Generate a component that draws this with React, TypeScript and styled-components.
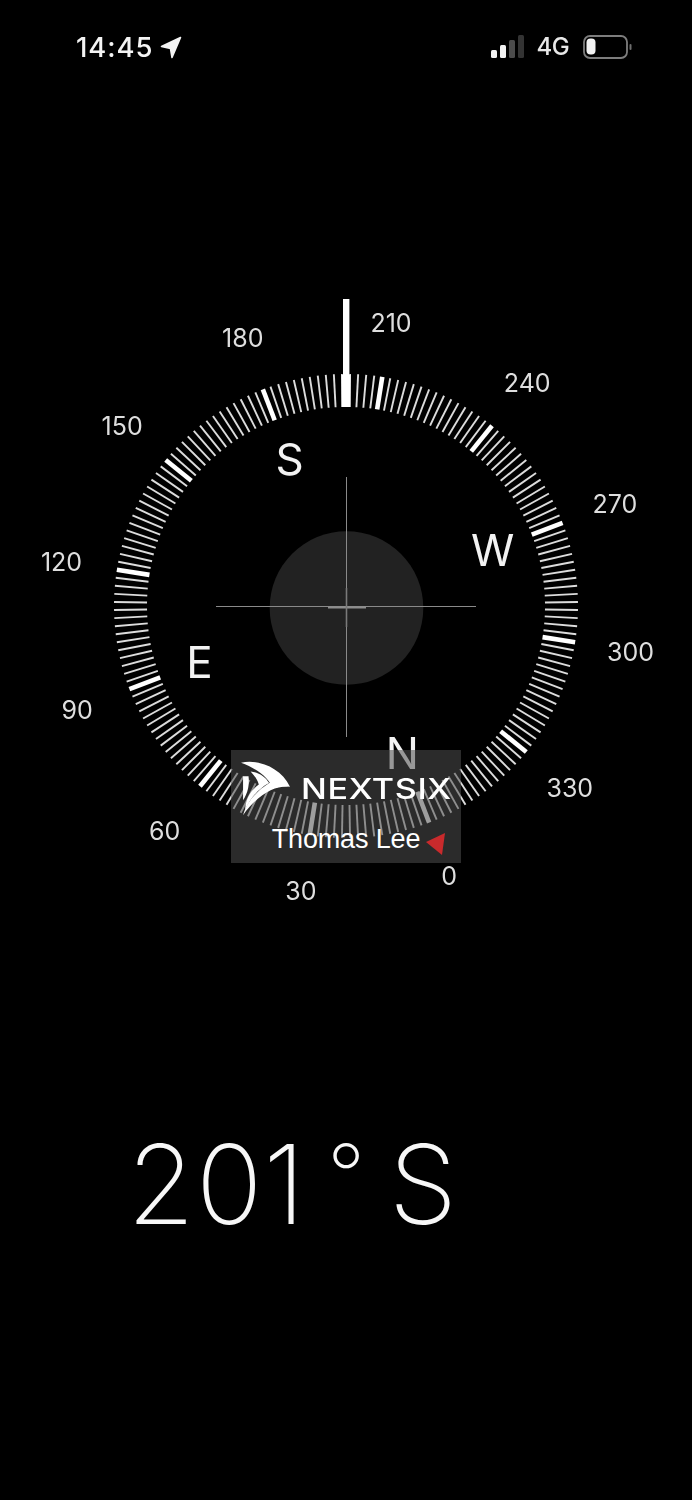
import React from "react";
import styled, { createGlobalStyle } from "styled-components";

const Global = createGlobalStyle`
  html, body { margin: 0; padding: 0; background: #000; }
  body { font-family: Inter, "Liberation Sans", sans-serif; color: #fff; }
`;

const CX = 346;
const CY = 346;
const HEADING = 201;

const Screen = styled.div`
  width: 692px;
  height: 1500px;
  background: #000;
  display: flex;
  flex-direction: column;
  overflow: hidden;
`;

const StatusBar = styled.header`
  height: 34px;
  padding: 30px 60px 0 76px;
  display: flex;
  justify-content: space-between;
  align-items: flex-start;
  filter: blur(0.5px);
`;

const TimeGroup = styled.div`
  display: flex;
  align-items: center;
  gap: 7px;
`;

const Time = styled.span`
  font-size: 27.5px;
  line-height: 34px;
  font-weight: 500;
  letter-spacing: 0.9px;
  color: #f4f4f4;
`;

const Indicators = styled.div`
  display: flex;
  align-items: center;
  height: 34px;
  gap: 12px;
`;

const Network = styled.span`
  font-size: 24px;
  line-height: 34px;
  font-weight: 500;
  letter-spacing: -0.6px;
  margin-right: 2px;
  color: #e8e8e8;
`;

const Stage = styled.main`
  position: relative;
  width: 692px;
  height: 692px;
  margin-top: 196px;
  flex: none;
`;

const Dial = styled.svg`
  display: block;
  filter: blur(0.45px);
`;

const DegreeLabel = styled.span`
  position: absolute;
  transform: translate(-50%, -50%);
  font-size: 25px;
  line-height: 30px;
  font-weight: 400;
  color: #dedede;
  filter: blur(0.3px);
`;

const CardinalLabel = styled.span`
  position: absolute;
  transform: translate(-50%, -50%);
  font-size: 44px;
  line-height: 50px;
  font-weight: 400;
  color: #f2f2f2;
  filter: blur(0.3px);
`;

const Watermark = styled.aside`
  position: absolute;
  left: 231px;
  top: 490px;
  width: 230px;
  height: 113px;
  background: rgba(78, 78, 78, 0.55);
  display: flex;
  flex-direction: column;
  align-items: center;
`;

const BrandRow = styled.div`
  display: flex;
  align-items: center;
  width: 100%;
  height: 67px;
  padding: 10px 0 0 10px;
  box-sizing: border-box;
  gap: 10px;
`;

const BrandName = styled.span`
  font-family: Inter, sans-serif;
  font-size: 28px;
  line-height: 30px;
  font-weight: 500;
  letter-spacing: 0.5px;
  color: #fff;
  transform: scaleX(1.22);
  transform-origin: left center;
`;

const Owner = styled.span`
  font-family: "Liberation Sans", Arial, sans-serif;
  font-size: 27px;
  line-height: 32px;
  letter-spacing: -0.15px;
  color: #fff;
  margin-top: 6px;
`;

const RedMarker = styled.svg`
  position: absolute;
  left: 425px;
  top: 572px;
  filter: blur(0.5px);
`;

const HeadingReadout = styled.div`
  margin: 167px 0 0 127px;
  font-size: 110px;
  line-height: 130px;
  font-weight: 250;
  letter-spacing: 1px;
  word-spacing: -9px;
  color: #f7f7f7;
  white-space: nowrap;
`;

const DegreeSign = styled.span`
  font-size: 83px;
  line-height: 0;
  vertical-align: 20px;
  margin-left: 21px;
`;

const polar = (bearing: number, r: number) => {
  const a = ((bearing - HEADING) * Math.PI) / 180;
  return { x: CX + r * Math.sin(a), y: CY - r * Math.cos(a) };
};

const ticks = Array.from({ length: 180 }, (_, i) => i * 2);
const degrees = [0, 30, 60, 90, 120, 150, 180, 210, 240, 270, 300, 330];
const cardinals: [string, number][] = [["N", 0], ["E", 90], ["S", 180], ["W", 270]];

const LocationArrow = () => (
  <svg width="22" height="23" viewBox="0 0 22 23">
    <path
      d="M20.5 1.5 L1.5 10.5 L10.5 12.5 L12 21.5 Z"
      fill="#f4f4f4"
      stroke="#f4f4f4"
      strokeWidth="1.6"
      strokeLinejoin="round"
    />
  </svg>
);

const Signal = () => (
  <svg width="34" height="24" viewBox="0 0 34 24">
    <rect x="0" y="15" width="6" height="8" rx="1.5" fill="#f2f2f2" />
    <rect x="9" y="10" width="6" height="13" rx="1.5" fill="#f2f2f2" />
    <rect x="18" y="5" width="6" height="18" rx="1.5" fill="#4c4c4c" />
    <rect x="27" y="0" width="6" height="23" rx="1.5" fill="#333" />
  </svg>
);

const Battery = () => (
  <svg width="49" height="24" viewBox="0 0 49 24">
    <rect x="1" y="1" width="43" height="22" rx="6" fill="none" stroke="#7d7d7d" strokeWidth="1.8" />
    <rect x="3.5" y="3.5" width="9" height="16" rx="4" fill="#f2f2f2" />
    <rect x="46.5" y="9" width="2" height="6" rx="1" fill="#6d6d6d" />
  </svg>
);

const BrandMark = () => (
  <svg width="50" height="55" viewBox="22 20 146 160">
    <path d="M22 25 C70 13 138 38 165 95 C150 93 130 94 114 100 C104 68 68 42 22 25 Z" fill="#fff" />
    <path d="M165 95 C125 90 72 115 28 178 C40 138 64 110 108 82 Z" fill="#fff" />
    <path d="M50 50 C74 52 94 66 104 84 C76 98 52 124 34 162 C36 130 48 108 74 88 C70 76 62 62 50 50 Z" fill="#fff" />
    <path d="M28 64 L44 64 C47 90 42 112 28 134 Z" fill="#fff" />
  </svg>
);

export default function App() {
  return (
    <Screen>
      <Global />
      <StatusBar>
        <TimeGroup>
          <Time>14:45</Time>
          <LocationArrow />
        </TimeGroup>
        <Indicators>
          <Signal />
          <Network>4G</Network>
          <Battery />
        </Indicators>
      </StatusBar>
      <Stage>
        <Dial width="692" height="692" viewBox="0 0 692 692">
          {ticks.map((b) => {
            const major = b % 30 === 0;
            const p1 = polar(b, 199);
            const p2 = polar(b, 232);
            return (
              <line
                key={b}
                x1={p1.x}
                y1={p1.y}
                x2={p2.x}
                y2={p2.y}
                stroke={major ? "#fff" : "#dcdcdc"}
                strokeWidth={major ? 4.6 : 1.9}
              />
            );
          })}
          <rect x="343" y="39" width="6.4" height="77" fill="#fff" />
          <rect x="341.5" y="115" width="9" height="32" fill="#fff" />
          <circle cx="346.5" cy="348" r="76.8" fill="#222" />
          <line x1="216" y1="346.5" x2="476" y2="346.5" stroke="#8a8a8a" strokeWidth="1" />
          <line x1="346.5" y1="217" x2="346.5" y2="477" stroke="#8a8a8a" strokeWidth="1" />
          <line x1="328" y1="347.5" x2="366" y2="347.5" stroke="#8e8e8e" strokeWidth="2" />
          <line x1="346.5" y1="328" x2="346.5" y2="367" stroke="#7a7a7a" strokeWidth="1.6" />
        </Dial>
        {degrees.map((d) => {
          const p = polar(d, 288);
          return (
            <DegreeLabel key={d} style={{ left: p.x, top: p.y + 1 }}>
              {d}
            </DegreeLabel>
          );
        })}
        {cardinals.map(([name, b]) => {
          const p = polar(b, 157);
          return (
            <CardinalLabel key={name} style={{ left: p.x, top: p.y }}>
              {name}
            </CardinalLabel>
          );
        })}
        <Watermark>
          <BrandRow>
            <BrandMark />
            <BrandName>NEXTSIX</BrandName>
          </BrandRow>
          <Owner>Thomas Lee</Owner>
        </Watermark>
        <RedMarker width="22" height="24" viewBox="0 0 22 24">
          <polygon points="1,10 20,1 17,23" fill="#c92a2c" />
        </RedMarker>
      </Stage>
      <HeadingReadout>
        201<DegreeSign>°</DegreeSign> S
      </HeadingReadout>
    </Screen>
  );
}
